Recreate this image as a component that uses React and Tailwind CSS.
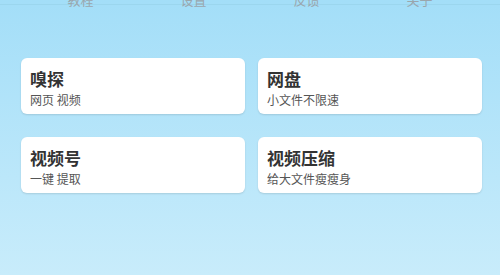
import React from "react";

// Top tab labels, mostly scrolled out of view
const tabs = ["教程", "设置", "反馈", "关于"];

// Feature cards
const cards = [
  { title: "嗅探", desc: "网页 视频" },
  { title: "网盘", desc: "小文件不限速" },
  { title: "视频号", desc: "一键 提取" },
  { title: "视频压缩", desc: "给大文件瘦瘦身" },
];

const font = {
  fontFamily: '"Noto Sans CJK SC", "Noto Sans", sans-serif',
};

const App = () => {
  return (
    <div
      className="w-[500px] h-[275px] overflow-hidden bg-gradient-to-b from-[#a3def8] to-[#c8ecfb]"
      style={font}
    >
      {/* Tab bar */}
      <div className="grid grid-cols-4 px-6 h-[12px] -mt-[7px] border-b border-[#9bd6ee]">
        {tabs.map((t) => (
          <div key={t} className="text-center text-[13px] leading-[14px] text-[#9aa6ad]">
            {t}
          </div>
        ))}
      </div>

      {/* Cards */}
      <div className="grid grid-cols-2 gap-x-[13px] gap-y-[23px] pl-[21px] pr-[18px] pt-[53px]">
        {cards.map((c) => (
          <div
            key={c.title}
            className="h-[56px] bg-white rounded-md shadow-[0_1px_2px_rgba(0,0,0,0.12)] pl-[9px] pt-[11px]"
          >
            <div className="text-[17px] leading-[20px] font-semibold text-[#333]">{c.title}</div>
            <div className="text-[12px] leading-[16px] text-[#555] mt-[3px]">{c.desc}</div>
          </div>
        ))}
      </div>
    </div>
  );
};

export default App;
